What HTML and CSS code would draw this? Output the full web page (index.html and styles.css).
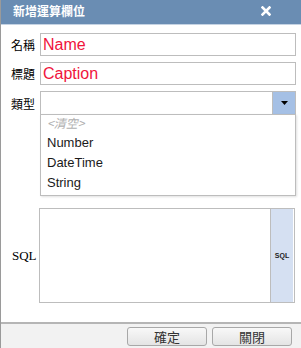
FILE: index.html
```html
<!DOCTYPE html>
<html>
<head>
<meta charset="utf-8">
<link rel="stylesheet" href="styles.css">
</head>
<body>
<div class="dialog">
  <div class="titlebar">
    <span class="title">新增運算欄位</span>
    <svg class="close" width="10" height="10" viewBox="0 0 10 10"><path d="M1.5 1.5L8.5 8.5M8.5 1.5L1.5 8.5" stroke="#fff" stroke-width="2.6" stroke-linecap="square"/></svg>
  </div>
  <div class="body">
    <div class="row">
      <label class="lbl">名稱</label>
      <div class="field"><span class="val">Name</span></div>
    </div>
    <div class="row">
      <label class="lbl">標題</label>
      <div class="field"><span class="val">Caption</span></div>
    </div>
    <div class="row combo-row">
      <label class="lbl">類型</label>
      <div class="combo">
        <div class="combo-text"></div>
        <div class="combo-btn"><svg width="7" height="4" viewBox="0 0 7 4"><path d="M0 0H7L3.5 4Z" fill="#000"/></svg></div>
        <ul class="list">
          <li class="empty">&lt;清空&gt;</li>
          <li>Number</li>
          <li>DateTime</li>
          <li>String</li>
        </ul>
      </div>
    </div>
    <div class="row sql-row">
      <label class="lbl sql-lbl">SQL</label>
      <div class="sqlbox">
        <div class="sqltext"></div>
        <div class="sqlbtn">SQL</div>
      </div>
    </div>
  </div>
  <div class="footer">
    <button class="btn">確定</button>
    <button class="btn">關閉</button>
  </div>
</div>
</body>
</html>
```

FILE: styles.css
```css
html, body {
  margin: 0;
  padding: 0;
  background: #fff;
}
body {
  font-family: "Liberation Sans", "Noto Sans CJK TC", sans-serif;
  width: 301px;
  height: 348px;
  overflow: hidden;
}
.dialog {
  height: 348px;
  border-left: 1px solid #9a9a9a;
  display: flex;
  flex-direction: column;
  box-sizing: border-box;
}
.titlebar {
  height: 25px;
  background: #6a8db3;
  border-bottom: 1px solid #c5d3e3;
  display: flex;
  align-items: center;
  justify-content: space-between;
  padding: 0 30px 0 12px;
  box-sizing: border-box;
}
.title {
  color: #fff;
  font-weight: bold;
  font-size: 12px;
  font-family: "Noto Sans CJK TC", sans-serif;
  line-height: 14px;
  margin-top: -2px;
}
.close {
  display: block;
  margin-top: -2px;
}
.body {
  flex: 1;
  padding-top: 8px;
  display: flex;
  flex-direction: column;
}
.row {
  display: flex;
  align-items: center;
  margin-bottom: 6px;
}
.lbl {
  width: 39px;
  padding-left: 10px;
  box-sizing: border-box;
  font-size: 12px;
  font-family: "Noto Sans CJK TC", sans-serif;
  color: #000;
}
.field {
  width: 256px;
  height: 23px;
  border: 1px solid #bdbdbd;
  box-sizing: border-box;
  display: flex;
  align-items: center;
  padding-left: 2px;
}
.val {
  color: #f0143c;
  font-size: 16px;
  line-height: 18px;
}
.combo {
  position: relative;
  width: 256px;
  height: 24px;
  border: 1px solid #bdbdbd;
  box-sizing: border-box;
  display: flex;
}
.combo-text {
  flex: 1;
}
.combo-btn {
  width: 22px;
  background: #a5c0e5;
  display: flex;
  align-items: center;
  justify-content: center;
  margin: -1px -1px -1px 0;
  border: 1px solid #bdbdbd;
}
.list {
  position: absolute;
  left: -1px;
  top: 22px;
  width: 256px;
  box-sizing: border-box;
  margin: 0;
  padding: 0;
  list-style: none;
  background: #fff;
  border: 1px solid #bdbdbd;
  box-shadow: 1px 1px 2px rgba(0,0,0,0.12);
  z-index: 2;
}
.list li {
  height: 20px;
  line-height: 16px;
  padding-left: 6px;
  font-size: 13px;
  color: #1a1a1a;
}
.list li.empty {
  color: #b0b0b0;
  font-style: italic;
  font-family: "Noto Sans CJK TC", sans-serif;
  font-size: 12px;
}
.sql-row {
  margin-top: 87px;
}
.sql-lbl {
  font-family: "Liberation Serif", serif;
  font-size: 13px;
  padding-left: 11px;
}
.sqlbox {
  width: 256px;
  height: 95px;
  border: 1px solid #bdbdbd;
  box-sizing: border-box;
  display: flex;
  margin-left: -1px;
}
.sqltext {
  flex: 1;
}
.sqlbtn {
  width: 22px;
  background: #d5e0f2;
  border-left: 1px solid #bdbdbd;
  display: flex;
  align-items: center;
  justify-content: center;
  font-size: 7px;
  font-weight: bold;
  color: #222;
  margin-right: 1px;
}
.footer {
  height: 26px;
  border-top: 2px solid #b5b5b5;
  background: #f2f2f2;
  display: flex;
  align-items: flex-start;
  justify-content: flex-end;
  padding: 3px 9px 0 0;
  gap: 5px;
  box-sizing: border-box;
}
.btn {
  width: 80px;
  height: 19px;
  border: 1px solid #a8a8a8;
  border-radius: 3px;
  background: linear-gradient(#f8f8f8, #e4e4e4);
  font-family: "Noto Sans CJK TC", sans-serif;
  font-size: 13px;
  line-height: 15px;
  color: #333;
  padding: 0;
  margin: 0;
}
```
